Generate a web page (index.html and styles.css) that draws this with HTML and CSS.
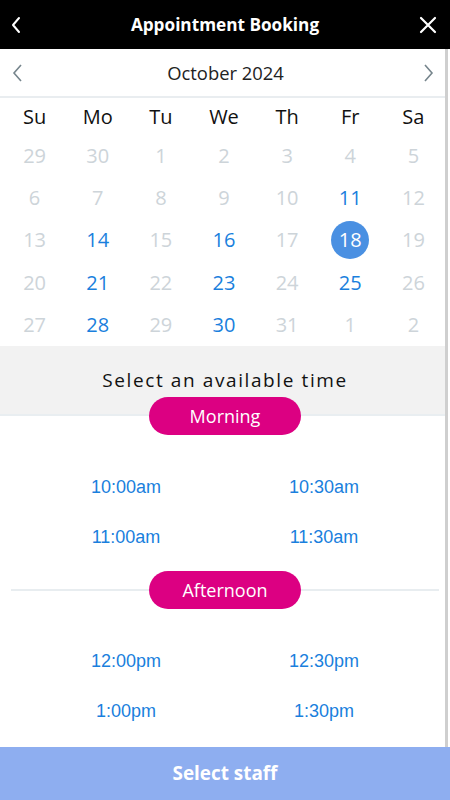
FILE: index.html
```html
<!DOCTYPE html>
<html>
<head>
<meta charset="utf-8">
<link rel="stylesheet" href="styles.css">
</head>
<body>
<div class="app">
  <header class="topbar">
    <span class="icon-btn left">
      <svg width="12" height="18" viewBox="0 0 12 18"><polyline points="9,2 3,9 9,16" fill="none" stroke="#fff" stroke-width="2" stroke-linecap="round" stroke-linejoin="round"/></svg>
    </span>
    <h1 class="title">Appointment Booking</h1>
    <span class="icon-btn right">
      <svg width="18" height="18" viewBox="0 0 18 18"><path d="M2 2 L16 16 M16 2 L2 16" fill="none" stroke="#fff" stroke-width="2.2" stroke-linecap="round"/></svg>
    </span>
  </header>
  <main class="main">
    <div class="content">
      <div class="month-row">
        <svg width="12" height="18" viewBox="0 0 12 18"><polyline points="9,1 2,9 9,17" fill="none" stroke="#76858c" stroke-width="1.6"/></svg>
        <span class="month">October 2024</span>
        <svg width="12" height="18" viewBox="0 0 12 18"><polyline points="3,1 10,9 3,17" fill="none" stroke="#76858c" stroke-width="1.6"/></svg>
      </div>
      <div class="cal">
        <div class="wd">Su</div><div class="wd">Mo</div><div class="wd">Tu</div><div class="wd">We</div><div class="wd">Th</div><div class="wd">Fr</div><div class="wd">Sa</div>
        <div class="d">29</div><div class="d">30</div><div class="d">1</div><div class="d">2</div><div class="d">3</div><div class="d">4</div><div class="d">5</div>
        <div class="d">6</div><div class="d">7</div><div class="d">8</div><div class="d">9</div><div class="d">10</div><div class="d av">11</div><div class="d">12</div>
        <div class="d">13</div><div class="d av">14</div><div class="d">15</div><div class="d av">16</div><div class="d">17</div><div class="d sel"><span>18</span></div><div class="d">19</div>
        <div class="d">20</div><div class="d av">21</div><div class="d">22</div><div class="d av">23</div><div class="d">24</div><div class="d av">25</div><div class="d">26</div>
        <div class="d">27</div><div class="d av">28</div><div class="d">29</div><div class="d av">30</div><div class="d">31</div><div class="d">1</div><div class="d">2</div>
      </div>
      <div class="band">Select an available time</div>
      <div class="pill-row first">
        <span class="pill">Morning</span>
      </div>
      <div class="times">
        <span>10:00am</span><span>10:30am</span>
        <span>11:00am</span><span>11:30am</span>
      </div>
      <div class="pill-row split">
        <span class="line"></span>
        <span class="pill">Afternoon</span>
        <span class="line"></span>
      </div>
      <div class="times">
        <span>12:00pm</span><span>12:30pm</span>
        <span>1:00pm</span><span>1:30pm</span>
      </div>
    </div>
    <div class="scroll"><div class="thumb"></div></div>
  </main>
  <footer class="cta">Select staff</footer>
</div>
</body>
</html>
```

FILE: styles.css
```css
* { box-sizing: border-box; }
html, body { margin: 0; padding: 0; }
body {
  width: 450px;
  height: 800px;
  font-family: "Open Sans", "Noto Sans", sans-serif;
  background: #fff;
  overflow: hidden;
}
.app {
  display: flex;
  flex-direction: column;
  height: 800px;
}
.topbar {
  height: 49px;
  background: #000;
  display: flex;
  align-items: center;
  justify-content: space-between;
  padding: 0 13px 0 10px;
  flex-shrink: 0;
}
.icon-btn { display: flex; align-items: center; width: 20px; }
.icon-btn.right { justify-content: flex-end; }
.title {
  margin: 0 0 0 3px;
  color: #fff;
  font-size: 17.2px;
  font-weight: 700;
  letter-spacing: 0;
}
.main {
  flex: 1;
  display: flex;
  overflow: hidden;
}
.content {
  width: 445px;
  flex-shrink: 0;
}
.scroll {
  width: 5px;
  display: flex;
}
.thumb {
  width: 3px;
  background: #cfcfcf;
  height: 100%;
}
.month-row {
  height: 49px;
  display: flex;
  align-items: center;
  justify-content: space-between;
  padding: 0 11px 0 12px;
  border-bottom: 2px solid #e9edf0;
}
.month {
  font-size: 18.4px;
  color: #222;
  margin-left: 5px;
}
.cal {
  display: grid;
  grid-template-columns: repeat(7, 1fr);
  grid-template-rows: 36px repeat(5, 42.4px);
  padding: 0 0 0 3px;
}
.wd, .d {
  display: flex;
  align-items: center;
  justify-content: center;
  font-size: 20px;
}
.wd { color: #111; }
.d { color: #cdd4d9; }
.d.av { color: #1a7fdd; }
.d.sel span {
  width: 38px;
  height: 38px;
  border-radius: 50%;
  background: #4a90e2;
  color: #fff;
  display: flex;
  align-items: center;
  justify-content: center;
}
.band {
  background: #f2f2f2;
  height: 70px;
  border-bottom: 2px solid #e9eef1;
  text-align: center;
  font-size: 19px;
  letter-spacing: 1.6px;
  color: #111;
  padding: 21px 0 0 5px;
}
.pill-row {
  display: flex;
  align-items: center;
  justify-content: center;
}
.pill-row.first { margin-top: -19px; padding-left: 5px; }
.pill-row.split { margin-top: 8px; padding: 0 6px 0 11px; }
.line {
  flex: 1;
  height: 2px;
  background: #e8edf0;
}
.pill {
  width: 152px;
  height: 38px;
  border-radius: 19px;
  background: #dc0082;
  color: #fff;
  font-size: 18px;
  display: flex;
  align-items: center;
  justify-content: center;
}
.times {
  display: grid;
  grid-template-columns: 198px 198px;
  grid-auto-rows: 50px;
  padding: 28px 0 0 27px;
}
.times span {
  display: flex;
  align-items: center;
  justify-content: center;
  font-family: "Liberation Sans", Arial, sans-serif;
  font-size: 18px;
  color: #1a7fdd;
}
.cta {
  height: 53px;
  flex-shrink: 0;
  background: #8eaef0;
  color: #fff;
  font-weight: 700;
  font-size: 18.9px;
  display: flex;
  align-items: center;
  justify-content: center;
  padding-bottom: 2px;
}
```
